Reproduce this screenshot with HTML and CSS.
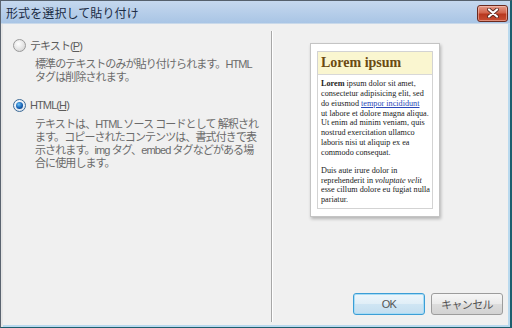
FILE: index.html
```html
<!DOCTYPE html>
<html lang="ja">
<head>
<meta charset="UTF-8" />
<title>形式を選択して貼り付け</title>
<link rel="stylesheet" href="styles.css">
</head>
<body>

<div class="window">
  <div class="titlebar">
    <span class="title">形式を選択して貼り付け</span>
    <button class="close" type="button" aria-label="閉じる">
      <svg width="14" height="10" viewBox="0 0 14 10">
        <path d="M3 1.5 L11 8.5 M11 1.5 L3 8.5" stroke="#5a2a22" stroke-width="3.8" stroke-linecap="round"/>
        <path d="M3 1.5 L11 8.5 M11 1.5 L3 8.5" stroke="#ffffff" stroke-width="2.2" stroke-linecap="round"/>
      </svg>
    </button>
  </div>

  <div class="client">
    <div class="options">
      <label class="option">
        <span class="radio"></span>
        <span class="label">テキスト(<u>P</u>)</span>
      </label>
      <p class="desc">標準のテキストのみが貼り付けられます。HTML<br>タグは削除されます。</p>

      <label class="option">
        <span class="radio checked"></span>
        <span class="label">HTML(<u>H</u>)</span>
      </label>
      <p class="desc">テキストは、HTML ソース コードとして 解釈され<br>ます。コピーされたコンテンツは、書式付きで表<br>示されます。img タグ、embed タグなどがある場<br>合に使用します。</p>
    </div>

    <div class="divider"></div>

    <div class="side">
      <div class="preview">
        <div class="sheet">
          <div class="sheet-head">Lorem ipsum</div>
          <div class="sheet-body">
            <p><b>Lorem</b> ipsum dolor sit amet,<br>consectetur adipisicing elit, sed<br>do eiusmod <a>tempor incididunt</a><br>ut labore et dolore magna aliqua.<br>Ut enim ad minim veniam, quis<br>nostrud exercitation ullamco<br>laboris nisi ut aliquip ex ea<br>commodo consequat.</p>
            <p>Duis aute irure dolor in<br>reprehenderit in <i>voluptate velit</i><br>esse cillum dolore eu fugiat nulla<br>pariatur.</p>
          </div>
        </div>
      </div>

      <div class="buttons">
        <button class="button default" type="button">OK</button>
        <button class="button" type="button">キャンセル</button>
      </div>
    </div>
  </div>
</div>

</body>
</html>
```

FILE: styles.css
```css
body {
  margin: 0;
  font-family: "Liberation Sans", "Noto Sans CJK JP", sans-serif;
  background: #f0f0f0;
}
.window {
  width: 512px;
  height: 328px;
  box-sizing: border-box;
  display: flex;
  flex-direction: column;
  background: #f0f0f0;
  border-top: 1px solid #55606c;
  border-left: 1px solid #5b6470;
  border-right: 2px solid #1d5e6e;
  border-bottom: 1px solid #1d5e6e;
  box-shadow: inset -2px -2px 0 #b9d9ee;
  overflow: hidden;
}
.titlebar {
  height: 22px;
  flex: none;
  display: flex;
  align-items: center;
  justify-content: space-between;
  padding: 0 2px 0 5px;
  background: linear-gradient(#c5d8ee, #a9c5e5);
  border-bottom: 1px solid #c9d9ea;
}
.title {
  font-family: "Noto Sans CJK JP", sans-serif;
  font-size: 12px;
  color: #1b2c44;
  letter-spacing: 0.1px;
}
.close {
  width: 31px;
  height: 17px;
  margin-top: 2px;
  padding: 0;
  display: flex;
  align-items: center;
  justify-content: center;
  border: 1px solid #6b2a1f;
  border-radius: 3px;
  background: linear-gradient(#e59a88, #d2644c 45%, #b8381f 55%, #c84e33);
  box-shadow: inset 0 0 0 1px rgba(255, 220, 210, 0.45);
}
.client {
  flex: 1;
  display: flex;
  border-left: 2px solid #e6e6e6;
  min-height: 0;
}
.options {
  width: 258px;
  padding: 13px 0 0 10px;
  color: #6b6b6b;
  font-size: 11px;
  letter-spacing: -0.9px;
}
.option {
  display: flex;
  align-items: center;
  gap: 4px;
  height: 16px;
}
.label {
  color: #5c5c5c;
}
.radio {
  width: 11px;
  height: 11px;
  border-radius: 50%;
  border: 1px solid #9a9a9a;
  background: radial-gradient(circle at 40% 35%, #ffffff, #dcdcdc 70%, #c8c8c8);
  position: relative;
}
.radio.checked {
  border-color: #3d6a96;
  background: radial-gradient(circle at 40% 35%, #ffffff, #dfe8f2 70%, #c2d4e6);
}
.radio.checked::after {
  content: "";
  position: absolute;
  left: 2px;
  top: 2px;
  width: 7px;
  height: 7px;
  border-radius: 50%;
  background: radial-gradient(circle at 40% 35%, #6cc4f8, #1660b4 55%, #082f62);
}
.desc {
  margin: 5px 0 13px 22px;
  line-height: 13px;
  white-space: nowrap;
}
.divider {
  width: 1px;
  margin: 7px 0 5px;
  background: #a7a7a7;
  border-right: 1px solid #ffffff;
}
.side {
  flex: 1;
  display: flex;
  flex-direction: column;
  justify-content: space-between;
  padding: 19px 7px 12px 37px;
}
.preview {
  width: 130px;
  height: 174px;
  padding: 7px 6px;
  box-sizing: border-box;
  background: #ffffff;
  border: 1px solid #c4c4c4;
  box-shadow: 1px 2px 3px rgba(0, 0, 0, 0.25);
}
.sheet {
  height: 100%;
  box-sizing: border-box;
  border: 1px solid #d3d3d3;
  font-family: "Liberation Serif", serif;
}
.sheet-head {
  background: #faf6d0;
  border-bottom: 1px solid #d8d8d8;
  color: #6a4a12;
  font-weight: bold;
  font-size: 14px;
  line-height: 22px;
  padding: 0 3px;
}
.sheet-body {
  padding: 4px 3px;
  font-size: 8.2px;
  line-height: 9.85px;
  color: #222;
  white-space: nowrap;
}
.sheet-body p {
  margin: 0 0 8px;
}
.sheet-body a {
  color: #2a47b8;
  text-decoration: underline;
}
.buttons {
  display: flex;
  justify-content: flex-end;
  gap: 6px;
}
.button {
  width: 72px;
  height: 22px;
  padding: 0;
  font-family: "Liberation Sans", "Noto Sans CJK JP", sans-serif;
  font-size: 11px;
  letter-spacing: -0.6px;
  color: #555;
  border: 1px solid #9c9c9c;
  border-radius: 3px;
  background: linear-gradient(#f6f6f6, #eaeaea 50%, #dcdcdc 52%, #d2d2d2);
}
.button.default {
  border-color: #3c9ed6;
  box-shadow: inset 0 0 0 1px #a8dcf5;
  background: linear-gradient(#eef6fb, #e0eef7 50%, #cfe5f3 52%, #c4def0);
}
```
